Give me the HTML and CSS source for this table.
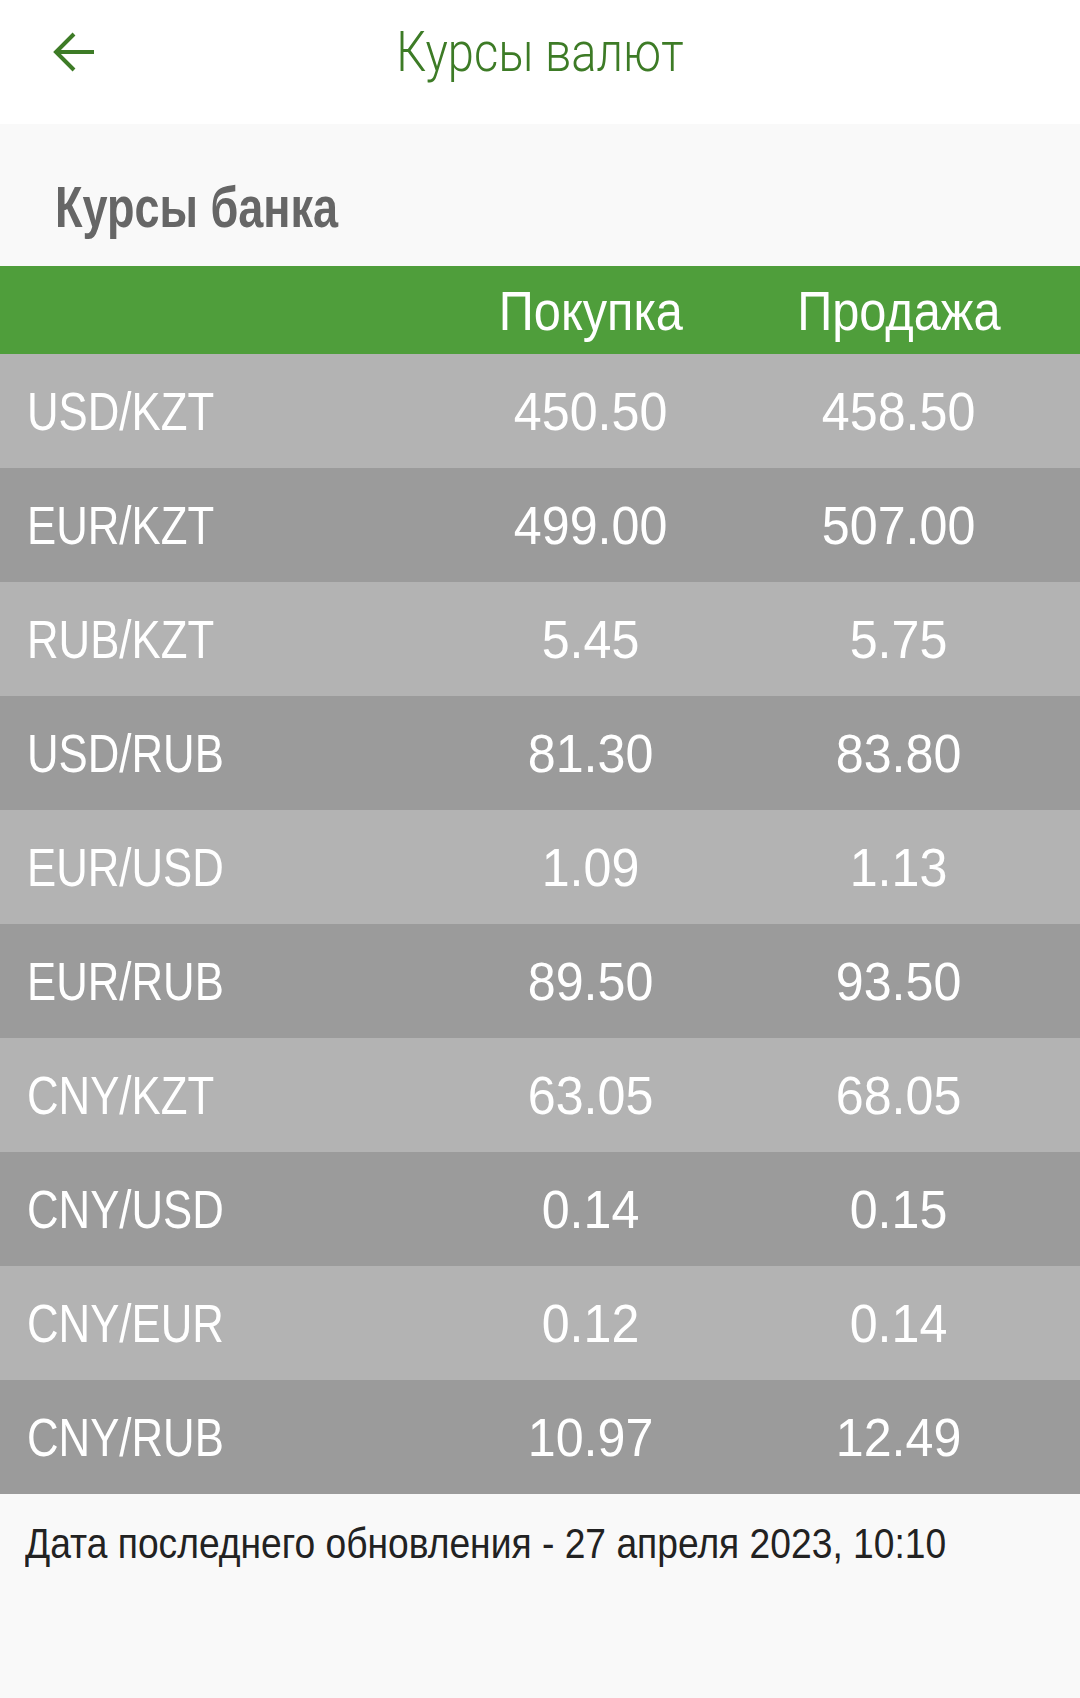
FILE: index.html
```html
<!DOCTYPE html>
<html lang="ru">
<head>
<meta charset="utf-8">
<title>Курсы валют</title>
<link rel="stylesheet" href="styles.css">
</head>
<body>
<header class="topbar">
  <div class="back">
    <svg class="back-icon" viewBox="0 0 42 40" width="42" height="40"><path d="M41 20H4M21 2L3 20l18 18" fill="none" stroke="#3d7b26" stroke-width="4"/></svg>
  </div>
  <h1 class="title"><span class="squeeze">Курсы валют</span></h1>
  <div></div>
</header>
<main class="content">
  <h2 class="section-title"><span class="squeeze">Курсы банка</span></h2>
  <div class="table">
    <div class="row head"><span></span><span class="num"><span class="squeeze">Покупка</span></span><span class="num"><span class="squeeze">Продажа</span></span></div>
    <div class="row light"><span class="pair"><span class="squeeze">USD/KZT</span></span><span class="num"><span class="squeeze">450.50</span></span><span class="num"><span class="squeeze">458.50</span></span></div>
    <div class="row dark"><span class="pair"><span class="squeeze">EUR/KZT</span></span><span class="num"><span class="squeeze">499.00</span></span><span class="num"><span class="squeeze">507.00</span></span></div>
    <div class="row light"><span class="pair"><span class="squeeze">RUB/KZT</span></span><span class="num"><span class="squeeze">5.45</span></span><span class="num"><span class="squeeze">5.75</span></span></div>
    <div class="row dark"><span class="pair"><span class="squeeze">USD/RUB</span></span><span class="num"><span class="squeeze">81.30</span></span><span class="num"><span class="squeeze">83.80</span></span></div>
    <div class="row light"><span class="pair"><span class="squeeze">EUR/USD</span></span><span class="num"><span class="squeeze">1.09</span></span><span class="num"><span class="squeeze">1.13</span></span></div>
    <div class="row dark"><span class="pair"><span class="squeeze">EUR/RUB</span></span><span class="num"><span class="squeeze">89.50</span></span><span class="num"><span class="squeeze">93.50</span></span></div>
    <div class="row light"><span class="pair"><span class="squeeze">CNY/KZT</span></span><span class="num"><span class="squeeze">63.05</span></span><span class="num"><span class="squeeze">68.05</span></span></div>
    <div class="row dark"><span class="pair"><span class="squeeze">CNY/USD</span></span><span class="num"><span class="squeeze">0.14</span></span><span class="num"><span class="squeeze">0.15</span></span></div>
    <div class="row light"><span class="pair"><span class="squeeze">CNY/EUR</span></span><span class="num"><span class="squeeze">0.12</span></span><span class="num"><span class="squeeze">0.14</span></span></div>
    <div class="row dark"><span class="pair"><span class="squeeze">CNY/RUB</span></span><span class="num"><span class="squeeze">10.97</span></span><span class="num"><span class="squeeze">12.49</span></span></div>
  </div>
  <p class="updated"><span class="squeeze">Дата последнего обновления - 27 апреля 2023, 10:10</span></p>
</main>
</body>
</html>
```
FILE: styles.css
```css
html, body {
  margin: 0;
  padding: 0;
}
body {
  background: #f9f9f9;
  font-family: "Liberation Sans", Arial, sans-serif;
  min-height: 1698px;
}
.squeeze {
  display: inline-block;
  white-space: nowrap;
}
.topbar {
  height: 124px;
  box-sizing: border-box;
  padding-bottom: 20px;
  background: #ffffff;
  display: grid;
  grid-template-columns: 1fr auto 1fr;
  align-items: center;
}
.back {
  padding-left: 53px;
  display: flex;
  align-items: center;
}
.title {
  margin: 0;
  font-family: Roboto, "Liberation Sans", sans-serif;
  font-weight: 300;
  font-size: 56px;
  color: #3d7b26;
  text-align: center;
}
.title .squeeze {
  transform: scaleX(0.84);
  transform-origin: center;
}
.content {
  display: flex;
  flex-direction: column;
}
.section-title {
  margin: 0;
  padding: 50px 0 0 55px;
  height: 92px;
  font-size: 57px;
  font-weight: 700;
  color: #666666;
}
.section-title .squeeze {
  transform: scaleX(0.79);
  transform-origin: left center;
}
.table {
  display: flex;
  flex-direction: column;
}
.row {
  display: grid;
  grid-template-columns: 1fr 308px 308px;
  padding: 0 27px;
  height: 114px;
  align-items: center;
  color: #ffffff;
  font-size: 54px;
}
.row.head {
  height: 88px;
  background: #4f9e3b;
  font-size: 56px;
}
.row.light { background: #b3b3b3; }
.row.dark { background: #9b9b9b; }
.pair .squeeze {
  transform: scaleX(0.81);
  transform-origin: left center;
}
.num { text-align: center; }
.num .squeeze {
  transform: scaleX(0.93);
  transform-origin: center;
}
.head .num .squeeze {
  transform: scaleX(0.87);
}
.updated {
  margin: 0;
  padding: 26px 0 0 25px;
  font-size: 42px;
  color: #222222;
}
.updated .squeeze {
  transform: scaleX(0.886);
  transform-origin: left center;
}
```
